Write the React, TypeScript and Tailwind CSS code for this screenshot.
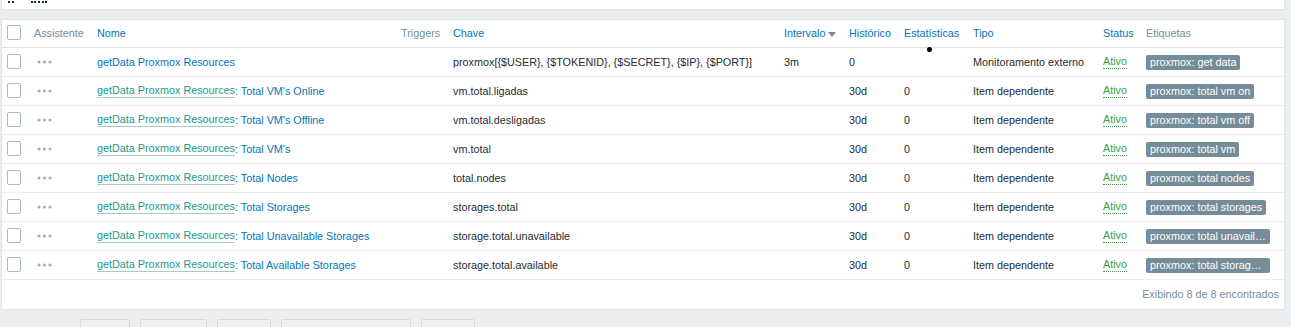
import React from "react"

const grid =
  "grid grid-cols-[27px_63px_304px_52px_331px_65px_55px_69px_130px_43px_143px]"

type Item = {
  name: string
  key: string
  interval: string
  history: string
  stats: string
  type: string
  tag: string
}

const items: Item[] = [
  { name: "", key: "proxmox[{$USER}, {$TOKENID}, {$SECRET}, {$IP}, {$PORT}]", interval: "3m", history: "0", stats: "", type: "Monitoramento externo", tag: "proxmox: get data" },
  { name: "Total VM's Online", key: "vm.total.ligadas", interval: "", history: "30d", stats: "0", type: "Item dependente", tag: "proxmox: total vm on" },
  { name: "Total VM's Offline", key: "vm.total.desligadas", interval: "", history: "30d", stats: "0", type: "Item dependente", tag: "proxmox: total vm off" },
  { name: "Total VM's", key: "vm.total", interval: "", history: "30d", stats: "0", type: "Item dependente", tag: "proxmox: total vm" },
  { name: "Total Nodes", key: "total.nodes", interval: "", history: "30d", stats: "0", type: "Item dependente", tag: "proxmox: total nodes" },
  { name: "Total Storages", key: "storages.total", interval: "", history: "30d", stats: "0", type: "Item dependente", tag: "proxmox: total storages" },
  { name: "Total Unavailable Storages", key: "storage.total.unavailable", interval: "", history: "30d", stats: "0", type: "Item dependente", tag: "proxmox: total unavailable storages" },
  { name: "Total Available Storages", key: "storage.total.available", interval: "", history: "30d", stats: "0", type: "Item dependente", tag: "proxmox: total storages available" },
]

function Checkbox() {
  return <span className="block w-[14px] h-[15px] border border-[#a9b9c2] rounded-[2px] bg-white -mt-[2px]" />
}

function Dots() {
  return (
    <svg width="15" height="4" viewBox="0 0 15 4" className="ml-[3px]">
      <circle cx="2" cy="2" r="1.6" fill="#a3b2ba" />
      <circle cx="7.5" cy="2" r="1.6" fill="#a3b2ba" />
      <circle cx="13" cy="2" r="1.6" fill="#a3b2ba" />
    </svg>
  )
}

const cell = "px-[5px] flex items-center whitespace-nowrap overflow-hidden"

export default function App() {
  return (
    <div className="relative w-[1291px] h-[327px] overflow-hidden bg-[#ebeef0] font-['Liberation_Sans',Arial,sans-serif] text-[10.8px] text-[#1f2c33]">
      {/* top filter panel (cut off) */}
      <div className="ml-[1px] w-[1284px] h-[10px] bg-white border-x border-b border-[#dfe4e7] flex items-start">
        <span className="ml-[6px] mt-[1px] w-[6px] border-b-2 border-dotted border-[#1f2c33]" />
        <span className="ml-[17px] mt-[1px] w-[16px] border-b-2 border-dotted border-[#1f2c33]" />
      </div>

      <div className="mt-[9px] ml-[1px] w-[1284px] bg-white border border-[#dfe4e7]">
        {/* header */}
        <div className={`${grid} h-[28px] border-b border-[#dde3e6]`}>
          <div className={cell}><Checkbox /></div>
          <div className={`${cell} text-[#768d99]`}>Assistente</div>
          <div className={`${cell} text-[#0275b8]`}>Nome</div>
          <div className={`${cell} text-[#768d99]`}>Triggers</div>
          <div className={`${cell} text-[#0275b8]`}>Chave</div>
          <div className={`${cell} text-[#0275b8]`}>
            Intervalo
            <span className="ml-[3px] mt-[2px] border-x-[4px] border-x-transparent border-t-[5px] border-t-[#768d99]" />
          </div>
          <div className={`${cell} text-[#0275b8]`}>Histórico</div>
          <div className={`${cell} text-[#0275b8]`}>Estatísticas</div>
          <div className={`${cell} text-[#0275b8]`}>Tipo</div>
          <div className={`${cell} text-[#0275b8]`}>Status</div>
          <div className={`${cell} text-[#768d99]`}>Etiquetas</div>
        </div>

        {items.map((it, i) => (
          <div key={i} className={`${grid} h-[29px] border-b border-[#ebeef0]`}>
            <div className={cell}><Checkbox /></div>
            <div className={cell}><Dots /></div>
            <div className={cell}>
              {it.name === "" ? (
                <span className="text-[#0275b8]">getData Proxmox Resources</span>
              ) : (
                <>
                  <span className="text-[#1a9a8a] border-b border-[#9fcfc8] leading-[13px]">getData Proxmox Resources</span>
                  <span className="text-[#0275b8]">: {it.name}</span>
                </>
              )}
            </div>
            <div className={cell} />
            <div className={cell}>{it.key}</div>
            <div className={cell}>{it.interval}</div>
            <div className={cell}>{it.history}</div>
            <div className={cell}>{it.stats}</div>
            <div className={cell}>{it.type}</div>
            <div className={cell}>
              <span className="text-[#429e47] border-b border-dotted border-[#429e47] leading-[13px]">Ativo</span>
            </div>
            <div className={cell}>
              <span className="block max-w-[124px] truncate bg-[#768d99] text-white px-[4px] rounded-[2px] leading-[15px] h-[15px]">
                {it.tag}
              </span>
            </div>
          </div>
        ))}

        <div className="h-[29px] flex items-center justify-end pr-[5px] text-[#768d99]">
          Exibindo 8 de 8 encontrados
        </div>
      </div>

      {/* mass action buttons (cut off) */}
      <div className="mt-[9px] flex items-start">
        <div className="w-[80px] pl-[2px] pt-[5px] text-[#1f2c33]">0 selecionados</div>
        <div className="flex gap-[10px]">
          {[
            ["Ativar", "w-[50px]"],
            ["Desativar", "w-[67px]"],
            ["Copiar", "w-[54px]"],
            ["Atualização em massa", "w-[130px]"],
            ["Excluir", "w-[54px]"],
          ].map(([label, w]) => (
            <div
              key={label}
              className={`${w} h-[24px] flex items-center justify-center border border-[#d4dadd] rounded-[2px] bg-[#eef0f2] text-[#acbbc2]`}
            >
              {label}
            </div>
          ))}
        </div>
      </div>

      {/* mouse cursor dot */}
      <span className="absolute left-[927px] top-[47px] w-[5px] h-[5px] rounded-full bg-black" />
    </div>
  )
}
